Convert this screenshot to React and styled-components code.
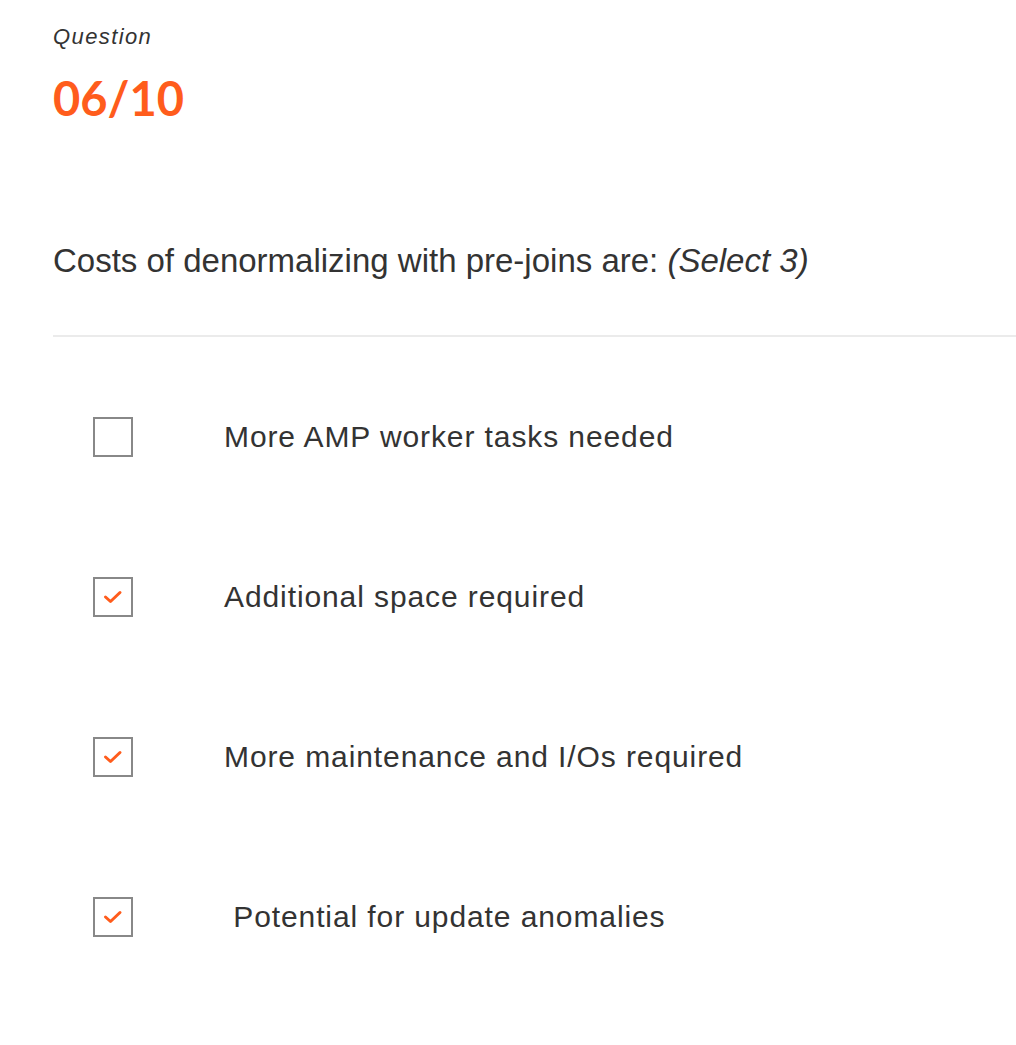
import styled, { createGlobalStyle } from "styled-components";

const GlobalStyle = createGlobalStyle`
  body {
    margin: 0;
    background: #ffffff;
    font-family: "Liberation Sans", Arial, Helvetica, sans-serif;
    color: #333333;
  }
`;

const options = [
  { id: 1, text: "More AMP worker tasks needed", checked: false },
  { id: 2, text: "Additional space required", checked: true },
  { id: 3, text: "More maintenance and I/Os required", checked: true },
  { id: 4, text: "\u00a0Potential for update anomalies", checked: true },
];

const App = () => {
  return (
    <>
      <GlobalStyle />
      <Page>
        <Header>
          <Label>Question</Label>
          <Counter>06/10</Counter>
        </Header>
        <Prompt>
          Costs of denormalizing with pre-joins are: <Hint>(Select 3)</Hint>
        </Prompt>
        <Divider />
        <OptionList>
          {options.map((opt) => (
            <Option key={opt.id}>
              <Box>
                {opt.checked && (
                  <svg width="20" height="16" viewBox="0 0 20 16">
                    <path
                      d="M2.5 8 L7.5 12.5 L17 3.5"
                      fill="none"
                      stroke="#ff5c1c"
                      strokeWidth="3"
                      strokeLinecap="round"
                      strokeLinejoin="round"
                    />
                  </svg>
                )}
              </Box>
              <OptionText>{opt.text}</OptionText>
            </Option>
          ))}
        </OptionList>
      </Page>
    </>
  );
};

export default App;

const Page = styled.div`
  padding: 24px 0 0 53px;
  font-family: "Liberation Sans", Arial, sans-serif;
`;

const Header = styled.div`
  display: flex;
  flex-direction: column;
`;

const Label = styled.div`
  font-family: "Liberation Sans", Arial, sans-serif;
  font-size: 22px;
  font-style: italic;
  letter-spacing: 1.4px;
  line-height: 26px;
  color: #333333;
`;

const Counter = styled.div`
  font-family: Lato, "Noto Sans", sans-serif;
  font-weight: 700;
  font-size: 47px;
  line-height: 60px;
  margin-top: 18px;
  color: #ff5c1c;
`;

const Prompt = styled.div`
  font-family: "Liberation Sans", Arial, sans-serif;
  margin-top: 113px;
  font-size: 33px;
  line-height: 40px;
  color: #333333;
`;

const Hint = styled.span`
  font-style: italic;
`;

const Divider = styled.hr`
  border: none;
  border-top: 2px solid #ebebeb;
  margin: 54px 0 0 0;
`;

const OptionList = styled.div`
  display: flex;
  flex-direction: column;
  padding-top: 80px;
  padding-left: 40px;
  gap: 120px;
`;

const Option = styled.div`
  display: flex;
  align-items: center;
  height: 40px;
`;

const Box = styled.div`
  box-sizing: border-box;
  width: 40px;
  height: 40px;
  border: 2px solid #888888;
  display: flex;
  align-items: center;
  justify-content: center;
  flex-shrink: 0;
`;

const OptionText = styled.span`
  font-family: "Liberation Sans", Arial, sans-serif;
  margin-left: 91px;
  font-size: 30px;
  letter-spacing: 0.9px;
  color: #333333;
  white-space: pre;
`;
